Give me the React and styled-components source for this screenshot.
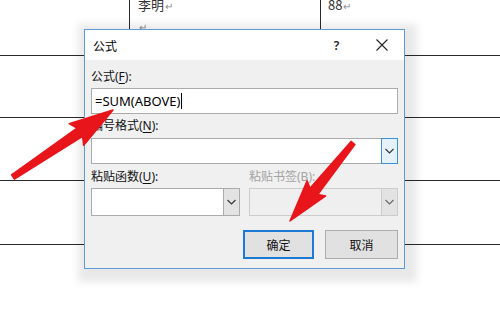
import React from "react";
import styled, { createGlobalStyle } from "styled-components";

const Global = createGlobalStyle`
  html, body { margin: 0; padding: 0; background: #fff; }
  body { font-family: "Noto Sans", "Noto Sans CJK SC", sans-serif; }
`;

const Page = styled.div`
  position: relative;
  width: 500px;
  height: 333px;
  overflow: hidden;
  background: #fff;
`;

const DocTable = styled.div`
  display: grid;
  grid-template-columns: 129px 191px 180px;
  grid-template-rows: 66px 62px 63px 64px;
  margin-top: -10px;
`;

const Cell = styled.div`
  box-sizing: border-box;
  border-bottom: 1px solid #2a2a2a;
  border-left: ${(p) => (p.$first ? "none" : "1px solid #2a2a2a")};
  padding: 5px 0 0 ${(p) => p.$pad || 8}px;
  font-family: "Noto Sans CJK SC", sans-serif;
  font-size: 13px;
  line-height: 20px;
  color: #333;
`;

const Mark = styled.span`
  font-size: 10px;
  color: #8a8a8a;
  margin-left: 1px;
`;

const Dialog = styled.div`
  position: absolute;
  left: 84px;
  top: 29px;
  width: 321px;
  height: 240px;
  box-sizing: border-box;
  border: 1px solid #5b9bd9;
  background: #f0f0f0;
  display: flex;
  flex-direction: column;
  box-shadow: 3px 4px 8px 9px rgba(0, 0, 0, 0.09);
  font-family: "Noto Sans", "Noto Sans CJK SC", sans-serif;
`;

const TitleBar = styled.div`
  height: 30px;
  background: #fff;
  display: flex;
  align-items: center;
`;

const Title = styled.div`
  flex: 1;
  padding-left: 8px;
  font-family: "Noto Sans CJK SC", sans-serif;
  font-size: 12px;
  color: #000;
`;

const TitleButton = styled.div`
  width: 45px;
  height: 30px;
  display: flex;
  align-items: center;
  justify-content: center;
  font-size: 12px;
  font-weight: 600;
  color: #222;
`;

const Body = styled.div`
  flex: 1;
  display: flex;
  flex-direction: column;
  padding: 0 6px;
`;

const Label = styled.div`
  margin-top: ${(p) => p.$mt || 0}px;
  height: 16px;
  line-height: 16px;
  font-size: 12px;
  color: ${(p) => (p.$disabled ? "#a3a3a3" : "#111")};
  white-space: nowrap;
`;

const U = styled.span`
  text-decoration: underline;
  text-underline-offset: 2px;
`;

const TextInput = styled.div`
  margin-top: 3px;
  height: 26px;
  box-sizing: border-box;
  border: 1px solid #ababab;
  background: #fff;
  display: flex;
  align-items: center;
  padding-left: 3px;
  font-size: 13px;
  color: #000;
`;

const Caret = styled.span`
  display: inline-block;
  width: 1px;
  height: 16px;
  background: #000;
  margin-left: 1px;
`;

const Combo = styled.div`
  margin-top: ${(p) => p.$mt || 0}px;
  height: ${(p) => p.$h}px;
  display: flex;
`;

const ComboField = styled.div`
  flex: 1;
  box-sizing: border-box;
  border: 1px solid ${(p) => (p.$disabled ? "#cccccc" : "#ababab")};
  border-right: none;
  background: ${(p) => (p.$disabled ? "#efefef" : "#fff")};
`;

const ComboButton = styled.div`
  width: 17px;
  box-sizing: border-box;
  border: 1px solid
    ${(p) => (p.$focus ? "#3c8fdc" : p.$disabled ? "#cccccc" : "#ababab")};
  background: ${(p) => (p.$focus ? "#e5f1fb" : "#e3e3e3")};
  display: flex;
  align-items: center;
  justify-content: center;
`;

const Pair = styled.div`
  display: grid;
  grid-template-columns: 1fr 1fr;
  column-gap: 9px;
`;

const Buttons = styled.div`
  margin-top: 14px;
  display: flex;
  justify-content: flex-end;
  gap: 11px;
`;

const PushButton = styled.div`
  width: ${(p) => p.$w}px;
  height: 29px;
  box-sizing: border-box;
  border: ${(p) => (p.$primary ? "2px solid #1a7ad4" : "1px solid #adadad")};
  background: #e1e1e1;
  display: flex;
  align-items: center;
  justify-content: center;
  font-family: "Noto Sans CJK SC", sans-serif;
  font-size: 12px;
  color: #111;
`;

const ArrowLayer = styled.svg`
  position: absolute;
  left: 0;
  top: 0;
  pointer-events: none;
`;

const Chevron = ({ color = "#333" }) => (
  <svg width="9" height="6" viewBox="0 0 9 6">
    <path d="M0.5 1 L4.5 5 L8.5 1" fill="none" stroke={color} strokeWidth="1.1" />
  </svg>
);

function arrowPoints(tx, ty, px, py, headLen, headHalf, tailHalf, neckHalf) {
  const dx = px - tx;
  const dy = py - ty;
  const len = Math.hypot(dx, dy);
  const ux = dx / len;
  const uy = dy / len;
  const nx = -uy;
  const ny = ux;
  const bx = px - ux * headLen;
  const by = py - uy * headLen;
  const wx = bx - ux * 4;
  const wy = by - uy * 4;
  const pts = [
    [tx + nx * tailHalf, ty + ny * tailHalf],
    [bx + nx * neckHalf, by + ny * neckHalf],
    [wx + nx * headHalf, wy + ny * headHalf],
    [px, py],
    [wx - nx * headHalf, wy - ny * headHalf],
    [bx - nx * neckHalf, by - ny * neckHalf],
    [tx - nx * tailHalf, ty - ny * tailHalf],
  ];
  return pts.map((p) => p.map((v) => v.toFixed(1)).join(",")).join(" ");
}

const rows = [
  ["", "李明", "88"],
  ["", "", ""],
  ["", "", ""],
  ["", "", ""],
];

export default function App() {
  return (
    <Page>
      <Global />
      <DocTable>
        {rows.map((r, i) =>
          r.map((c, j) => (
            <Cell key={`${i}-${j}`} $first={j === 0} $pad={j === 1 ? 8 : 7}>
              {i === 0 && j === 1 && (
                <>
                  {c}
                  <Mark>↵</Mark>
                  <br />
                  <Mark>↵</Mark>
                </>
              )}
              {i === 0 && j === 2 && (
                <>
                  {c}
                  <Mark>↵</Mark>
                </>
              )}
            </Cell>
          ))
        )}
      </DocTable>

      <Dialog>
        <TitleBar>
          <Title>公式</Title>
          <TitleButton>?</TitleButton>
          <TitleButton>
            <svg width="12" height="12" viewBox="0 0 12 12">
              <path d="M0.5 0.5 L11.5 11.5 M11.5 0.5 L0.5 11.5" stroke="#222" strokeWidth="1.1" />
            </svg>
          </TitleButton>
        </TitleBar>
        <Body>
          <Label $mt={9}>
            公式(<U>F</U>):
          </Label>
          <TextInput>
            =SUM(ABOVE)
            <Caret />
          </TextInput>
          <Label $mt={4}>
            编号格式(<U>N</U>):
          </Label>
          <Combo $mt={4} $h={26}>
            <ComboField />
            <ComboButton $focus>
              <Chevron />
            </ComboButton>
          </Combo>
          <Pair>
            <div>
              <Label $mt={5}>
                粘贴函数(<U>U</U>):
              </Label>
              <Combo $mt={3} $h={28}>
                <ComboField />
                <ComboButton>
                  <Chevron />
                </ComboButton>
              </Combo>
            </div>
            <div>
              <Label $mt={5} $disabled>
                粘贴书签(B):
              </Label>
              <Combo $mt={3} $h={28}>
                <ComboField $disabled />
                <ComboButton $disabled>
                  <Chevron color="#666" />
                </ComboButton>
              </Combo>
            </div>
          </Pair>
          <Buttons>
            <PushButton $primary $w={71}>
              确定
            </PushButton>
            <PushButton $w={73}>取消</PushButton>
          </Buttons>
        </Body>
      </Dialog>

      <ArrowLayer width="500" height="333" viewBox="0 0 500 333">
        <polygon
          points={arrowPoints(13, 177, 113, 110, 40, 13, 2.5, 5)}
          fill="#e8151b"
          stroke="#e8151b"
          strokeWidth="1.5"
          strokeLinejoin="round"
        />
        <polygon
          points={arrowPoints(353, 143, 290, 221, 38, 12, 2.5, 5)}
          fill="#e8151b"
          stroke="#e8151b"
          strokeWidth="1.5"
          strokeLinejoin="round"
        />
      </ArrowLayer>
    </Page>
  );
}
